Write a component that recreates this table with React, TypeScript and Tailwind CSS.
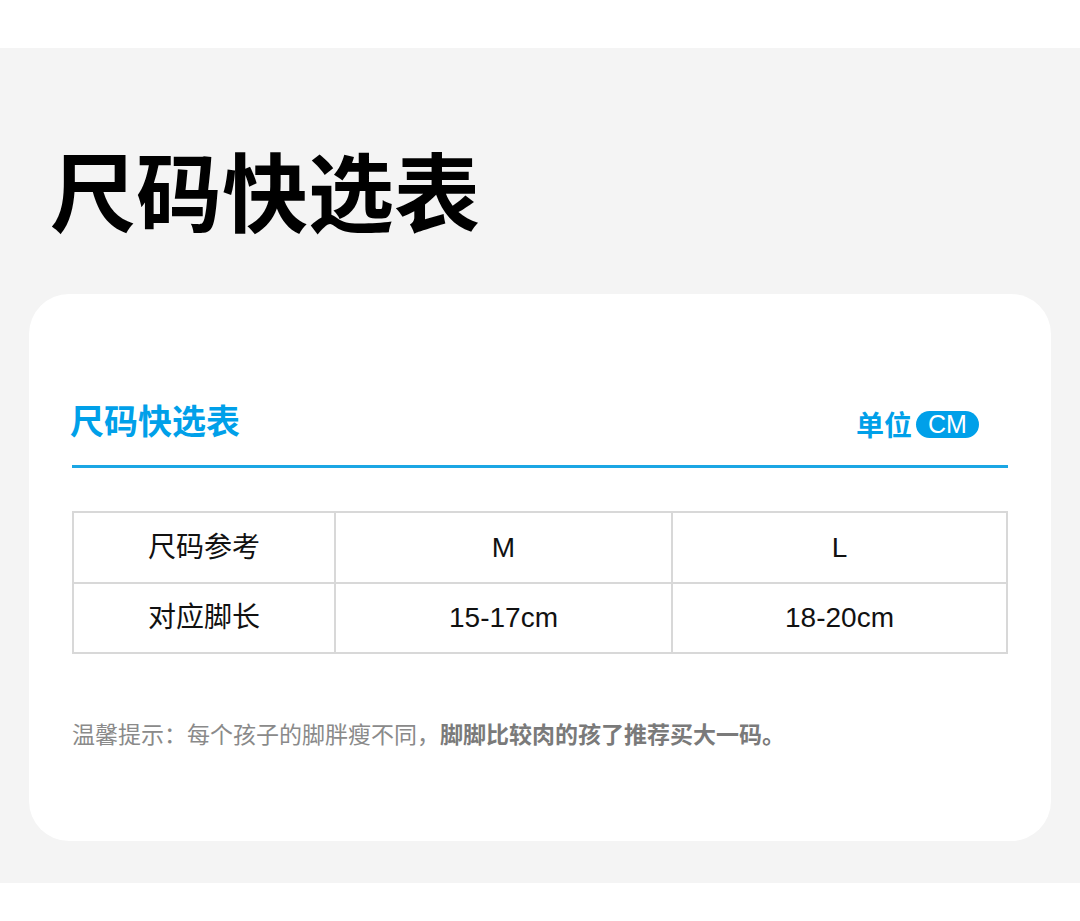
const sans = "font-['Liberation_Sans','Noto_Sans_CJK_SC',sans-serif]";

const rows = [
  ['尺码参考', 'M', 'L'],
  ['对应脚长', '15-17cm', '18-20cm'],
];

export default function App() {
  return (
    <div className={`w-[1080px] bg-white ${sans}`}>
      <div className="h-[48px] bg-white" />

      <div className="bg-[#f4f4f4] px-[29px] pt-[98px] pb-[42px]">
        {/* Big title */}
        <h1 className="ml-[21px] text-[86px] leading-none font-bold text-black font-['Noto_Sans_CJK_SC',sans-serif]">
          尺码快选表
        </h1>

        {/* Card */}
        <div className="mt-[62px] h-[547px] rounded-[40px] bg-white px-[43px] pt-[108px]">
          <div className="flex items-center justify-between">
            <h2 className="-ml-[2px] text-[34px] leading-none font-bold text-[#00a0e9] font-['Noto_Sans_CJK_SC',sans-serif]">
              尺码快选表
            </h2>
            <div className="mr-[29px] mt-[8px] flex items-center gap-[4px]">
              <span className="text-[28px] leading-none font-bold text-[#00a0e9] font-['Noto_Sans_CJK_SC',sans-serif]">
                单位
              </span>
              <span className="flex h-[27px] w-[63px] items-center justify-center rounded-full bg-[#00a0e9] text-[25px] leading-none text-white">
                CM
              </span>
            </div>
          </div>
          <div className="mt-[27px] h-[3px] bg-[#1ba6e4]" />

          {/* Table */}
          <div className="mt-[43px] grid grid-cols-[260px_335px_333px] gap-[2px] bg-[#d8d8d8] p-[2px]">
            {rows.map((row, i) =>
              row.map((cell, j) => (
                <div
                  key={`${i}-${j}`}
                  className={`flex items-center justify-center bg-white text-[28px] text-[#111] ${i === 0 ? 'h-[69px]' : 'h-[68px]'}`}
                >
                  {cell}
                </div>
              ))
            )}
          </div>

          {/* Notice */}
          <p className="mt-[68px] text-[23px] leading-none text-[#8a8a8a] font-['Noto_Sans_CJK_SC',sans-serif]">
            温馨提示：每个孩子的脚胖瘦不同，
            <span className="font-bold text-[#7a7a7a]">脚脚比较肉的孩了推荐买大一码。</span>
          </p>
        </div>
      </div>

      <div className="h-[38px] bg-white" />
    </div>
  );
}
